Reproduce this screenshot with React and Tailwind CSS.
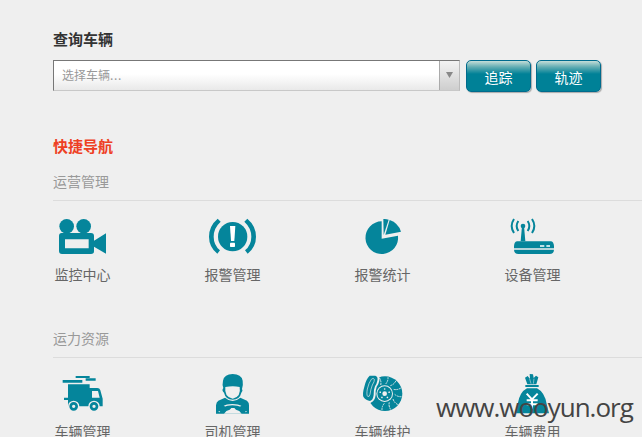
import React from 'react';

const TEAL = '#05859b';
const BG = '#efefef';

function Icon({ viewBox, children }) {
  return (
    <svg viewBox={viewBox} className="block h-[50px] w-[60px]" fill={TEAL}>
      {children}
    </svg>
  );
}

const Camera = () => (
  <Icon viewBox="9 15 180 150">
    <circle cx="50" cy="49" r="22" />
    <circle cx="101" cy="49" r="22" />
    <path fillRule="evenodd" d="M35 69H123Q132 69 132 78V92L168 70V131L132 110V124Q132 132 123 132H36Q27 132 27 123V78Q27 69 35 69ZM45 88V115H116V88Z" />
  </Icon>
);

const Alarm = () => (
  <Icon viewBox="9 15 180 150">
    <circle cx="98" cy="80" r="44" />
    <path d="M90 48H106L103 93H93Z" fill="#fff" />
    <rect x="90" y="98" width="15" height="13" rx="2" fill="#fff" />
    <path d="M53 26L62 35Q41 54 41 80Q41 105 60 121L52 131Q27 111 27 80Q27 48 53 26Z" />
    <path d="M142 26L133 35Q154 54 154 80Q154 105 135 121L143 131Q168 111 168 80Q168 48 142 26Z" />
  </Icon>
);

const Pie = () => (
  <Icon viewBox="9 15 180 150">
    <path d="M95 34V86L144 77A49 49 0 1 1 95 34Z" />
    <path d="M100 27Q108 26 116 29L101 75Z" />
    <path d="M119 30Q145 39 153 65L106 74Z" />
  </Icon>
);

const Router = () => (
  <Icon viewBox="9 15 180 150">
    <circle cx="69" cy="48" r="7" />
    <path d="M66 48H72L76 94H62Z" />
    <path d="M52 94H152Q161 94 162 108V115H42V108Q43 94 52 94Z" />
    <path d="M42 119H162Q161 132 149 132H55Q43 132 42 119Z" />
    <path d="M120 108H133M139 108H150" stroke="#fff" strokeWidth="4" />
    <g fill="none" stroke={TEAL} strokeWidth="6">
      <path d="M42 27Q28 48 42 69M55 33Q45 48 55 63M83 33Q93 48 83 63M96 27Q110 48 96 69" />
    </g>
  </Icon>
);

const Truck = () => (
  <Icon viewBox="9 21 180 150">
    <path d="M77 33H119V39H77ZM107 40H137V47H107ZM38 45H97V53H38Z" />
    <path fillRule="evenodd" d="M54 58H119V69H142Q149 69 151 76L158 101V124H54V105H42V98H54ZM126 78V98H149L144 78Z" />
    <circle cx="71" cy="124" r="17" fill={BG} />
    <circle cx="132" cy="124" r="17" fill={BG} />
    <circle cx="71" cy="124" r="9" fill="none" stroke={TEAL} strokeWidth="8" />
    <circle cx="132" cy="124" r="9" fill="none" stroke={TEAL} strokeWidth="8" />
  </Icon>
);

const Driver = () => (
  <Icon viewBox="9 21 180 150">
    <path d="M70 69Q66 60 69 47Q73 27 98 27Q124 27 128 47Q130 58 126 72Q130 77 124 83Q119 104 98 104Q77 104 72 83Q64 77 70 69Z" />
    <path d="M76 66Q99 62 119 66Q124 96 98 101Q72 96 76 66Z" fill={BG} />
    <path d="M75 98Q98 118 121 98L141 107Q147 112 147 121V146H48V121Q49 111 55 107Z" />
    <path d="M57 141Q63 119 97 119Q132 119 139 141" fill="none" stroke={BG} strokeWidth="4" />
    <path d="M72 146Q78 136 89 134L94 129H103L108 134Q119 136 125 146Z" fill={BG} />
    <path d="M54 130L71 120L78 130L65 139H52ZM141 130L125 120L117 130L131 139H144Z" />
  </Icon>
);

const Brake = () => (
  <Icon viewBox="9 21 180 150">
    <circle cx="105" cy="86" r="52" />
    <g stroke={BG} fill="none" strokeWidth="2.5">
      {[0, 30, 60, 90, 120, 150, 180, 330].map((a) => (
        <path key={a} d="M107 57Q115 48 114 36" transform={`rotate(${a} 105 86)`} strokeDasharray="6 2" />
      ))}
    </g>
    <circle cx="104" cy="86" r="25" fill={BG} />
    <circle cx="104" cy="86" r="22" />
    <circle cx="104" cy="86" r="7" fill={BG} />
    {[0, 72, 144, 216, 288].map((a) => (
      <circle key={a} cx="104" cy="72" r="2.5" fill={BG} transform={`rotate(${a} 104 86)`} />
    ))}
    <path d="M36 26H77Q91 32 88 47Q86 57 80 65Q76 76 77 90Q75 109 61 114H36Z" fill={BG} />
    <path d="M59 32H76Q85 35 82 47Q80 57 75 64Q70 76 71 90Q69 106 60 108Q48 107 41 97Q36 88 43 65Q48 42 59 32Z" />
    <path d="M64 43Q70 37 73 43Q74 49 67 60Q62 73 60 88Q58 97 53 94Q49 90 52 72Q56 54 64 43Z" fill="none" stroke={BG} strokeWidth="2" />
  </Icon>
);

const MoneyBag = () => (
  <Icon viewBox="219 21 180 150">
    <path d="M285 38L293 33L300 42L299 27L309 28L311 39L318 32L325 37L319 58H292Z" />
    <path d="M299 42L303 56M312 41L310 56" stroke={BG} strokeWidth="1.5" />
    <rect x="286" y="60" width="40" height="6" />
    <path d="M291 70H321Q344 82 350 117L357 145H255L263 117Q269 81 291 70Z" />
    <path d="M290 86L306 103L323 86M306 103V131M290 106H323M290 118H323" fill="none" stroke="#fff" strokeWidth="6" />
  </Icon>
);

function Section({ title, items }) {
  return (
    <section className="h-[157px]">
      <h3 className="h-[30px] border-b border-[#dcdcdc] text-[14px] leading-[20px] text-[#999]">{title}</h3>
      <div className="grid grid-cols-[repeat(4,150px)] pt-[14px]">
        {items.map(([label, Glyph]) => (
          <div key={label} className="w-[60px]">
            <Glyph />
            <div className="-mt-px whitespace-nowrap pl-[1.5px] text-[14px] leading-[20px] text-[#666]">{label}</div>
          </div>
        ))}
      </div>
    </section>
  );
}

function Button({ children }) {
  return (
    <button className="h-[32px] w-[65px] rounded-[5px] border border-[#006b8d] bg-[linear-gradient(to_bottom,#c5ded8_0px,#62adb3_6px,#008197_13px,#008197_100%)] pt-[2px] text-[14px] leading-[20px] text-white shadow-[1px_1px_1px_#aaa]">
      {children}
    </button>
  );
}

export default function App() {
  return (
    <main className="relative h-[437px] w-[642px] overflow-hidden bg-[#efefef] pl-[53px] pt-[29px] font-['Noto_Sans_CJK_SC',sans-serif]">
      <h2 className="h-[31px] text-[15px] font-bold leading-[20px] text-[#333]">查询车辆</h2>
      <div className="flex h-[33px]">
        <div className="mr-[6px] flex h-[31px] w-[407px] border border-b-[#c8c8c8] border-l-[#777] border-r-[#bbb] border-t-[#777] bg-[linear-gradient(to_bottom,#fff_45%,#e9e9e9)]">
          <span className="flex-1 pl-[8px] text-[12px] leading-[28px] text-[#999]">选择车辆<span className="tracking-[0.6px]">...</span></span>
          <span className="flex w-[20px] justify-center border-l border-[#aaa] bg-[linear-gradient(to_bottom,#f3f3f3,#cecece)] pt-[11px]">
            <svg className="h-[6px] w-[7px]" viewBox="0 0 7 6" fill="#888"><path d="M0 0H7L3.5 6Z" /></svg>
          </span>
        </div>
        <div className="flex gap-[5px]">
          <Button>追踪</Button>
          <Button>轨迹</Button>
        </div>
      </div>
      <h2 className="mt-[43px] h-[35px] text-[15px] font-bold leading-[20px] text-[#ee4023]">快捷导航</h2>
      <Section title="运营管理" items={[['监控中心', Camera], ['报警管理', Alarm], ['报警统计', Pie], ['设备管理', Router]]} />
      <Section title="运力资源" items={[['车辆管理', Truck], ['司机管理', Driver], ['车辆维护', Brake], ['车辆费用', MoneyBag]]} />
      <div className="absolute left-[436px] top-[388px] whitespace-nowrap font-['Open_Sans',sans-serif] text-[26px] leading-[38px] tracking-[-1px] text-[#444]">www.wooyun.org</div>
    </main>
  );
}
